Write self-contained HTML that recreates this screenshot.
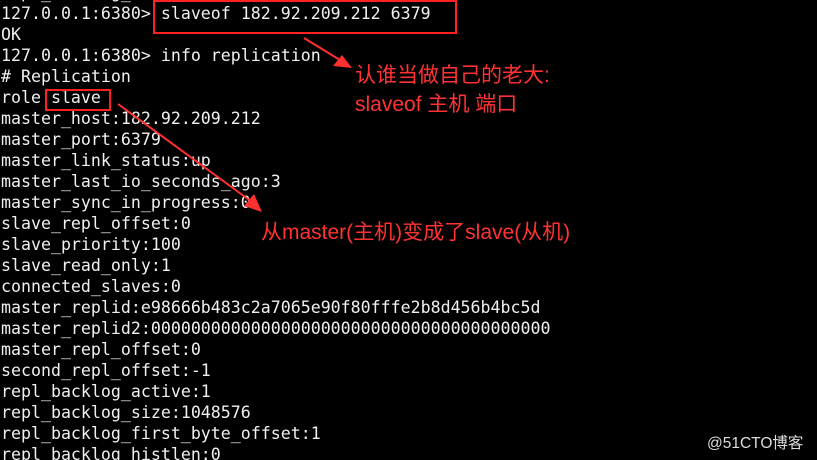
<!DOCTYPE html>
<html><head><meta charset="utf-8"><style>
html,body{margin:0;padding:0;background:#000;width:817px;height:460px;overflow:hidden;position:relative}
pre{position:absolute;left:1px;top:-18px;margin:0;font-family:"DejaVu Sans Mono","Liberation Mono",monospace;font-size:16.6px;line-height:21px;color:#f0f0f0}
.r{position:absolute;color:#ff3333;font-family:"Liberation Sans","Noto Sans CJK SC",sans-serif;font-size:21px;white-space:nowrap}
.box{position:absolute;border:2px solid #ff2020;box-sizing:border-box}
.wm{position:absolute;left:707px;top:431px;color:#ddd;font-family:"Liberation Sans","Noto Sans CJK SC",sans-serif;font-size:15.5px}
</style></head><body>
<pre>repl_backlog_histlen:0
127.0.0.1:6380> slaveof 182.92.209.212 6379
OK
127.0.0.1:6380> info replication
# Replication
role:slave
master_host:182.92.209.212
master_port:6379
master_link_status:up
master_last_io_seconds_ago:3
master_sync_in_progress:0
slave_repl_offset:0
slave_priority:100
slave_read_only:1
connected_slaves:0
master_replid:e98666b483c2a7065e90f80fffe2b8d456b4bc5d
master_replid2:0000000000000000000000000000000000000000
master_repl_offset:0
second_repl_offset:-1
repl_backlog_active:1
repl_backlog_size:1048576
repl_backlog_first_byte_offset:1
repl_backlog_histlen:0</pre>
<div class="box" style="left:153px;top:0;width:304px;height:34px"></div>
<div class="box" style="left:45px;top:89px;width:66px;height:22px"></div>
<svg style="position:absolute;left:0;top:0" width="817" height="460">
<line x1="304" y1="38" x2="340" y2="60" stroke="#ff3030" stroke-width="2"/>
<polygon points="352,68 333,66 342,55" fill="#ff3030"/>
<line x1="118" y1="104" x2="252" y2="202" stroke="#ff3030" stroke-width="2"/>
<polygon points="262,212 244,206 254,194" fill="#ff3030"/>
</svg>
<div class="r" style="left:355px;top:59px">认谁当做自己的老大:</div>
<div class="r" style="left:355px;top:88px">slaveof 主机 端口</div>
<div class="r" style="left:261px;top:216px">从master(主机)变成了slave(从机)</div>
<div class="wm">@51CTO博客</div>
</body></html>
